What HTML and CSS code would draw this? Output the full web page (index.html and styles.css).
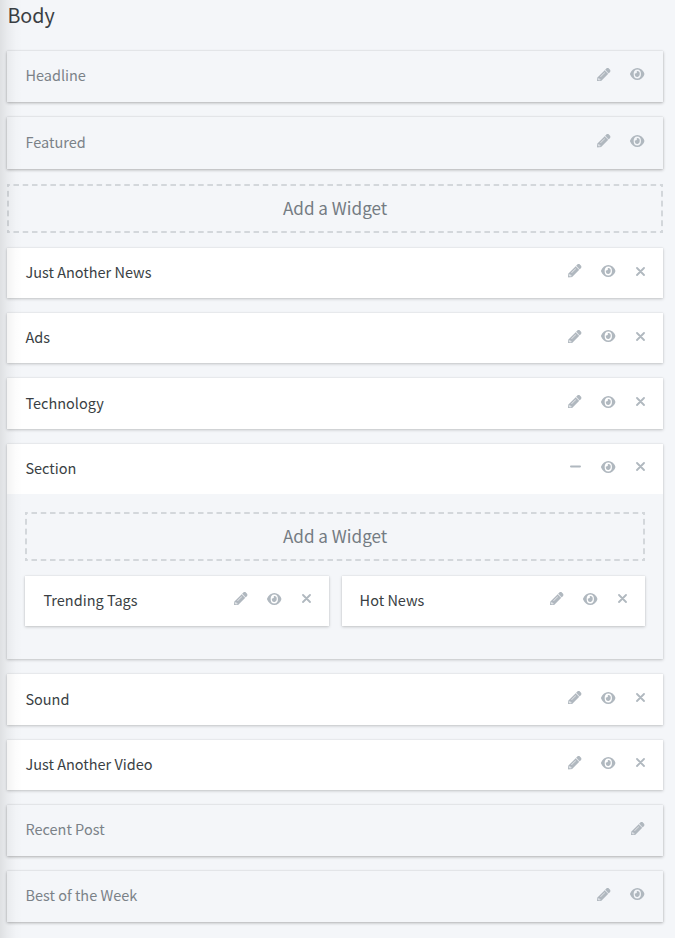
FILE: index.html
```html
<!DOCTYPE html>
<html lang="en">
<head>
<meta charset="utf-8">
<title>Body</title>
<link rel="stylesheet" href="styles.css">
</head>
<body>
<svg class="sprite" aria-hidden="true">
  <symbol id="pencil" viewBox="0 0 512 512"><path stroke="currentColor" stroke-width="14" d="M497.9 142.1l-46.1 46.1c-4.7 4.7-12.3 4.7-17 0l-111-111c-4.7-4.7-4.7-12.3 0-17l46.1-46.1c18.7-18.7 49.1-18.7 67.9 0l60.1 60.1c18.8 18.7 18.8 49.1 0 67.9zM284.2 99.8L21.6 362.4.4 483.9c-2.9 16.4 11.4 30.6 27.8 27.8l121.500-21.300 262.600-262.600c4.700-4.700 4.700-12.300 0-17l-111-111c-4.800-4.700-12.400-4.700-17.100 0zM124.100 339.900c-5.500-5.500-5.500-14.300 0-19.800l154-154c5.500-5.500 14.300-5.500 19.800 0s5.500 14.300 0 19.800l-154 154c-5.500 5.500-14.300 5.500-19.800 0zM88 424h48v36.300l-64.500 11.300-31.100-31.100L51.700 376H88v48z"/></symbol>
  <symbol id="eye" viewBox="0 64 576 384" preserveAspectRatio="none"><path d="M572.520 241.400C518.290 135.590 410.930 64 288 64S57.680 135.640 3.480 241.410a32.350 32.350 0 0 0 0 29.190C57.710 376.410 165.070 448 288 448s230.320-71.640 284.520-177.410a32.350 32.350 0 0 0 0-29.190zM288 400a144 144 0 1 1 144-144 143.930 143.930 0 0 1-144 144zm0-240a95.310 95.310 0 0 0-25.310 3.790 47.850 47.850 0 0 1-66.900 66.900A95.780 95.780 0 1 0 288 160z"/></symbol>
  <symbol id="times" viewBox="0 0 9 9"><path d="M1 1l7 7M8 1l-7 7" fill="none" stroke="currentColor" stroke-width="1.8" stroke-linecap="round"/></symbol>
  <symbol id="minus" viewBox="0 0 448 512"><path d="M416 220H32c-17.670 0-32 14.330-32 32v8c0 17.670 14.330 32 32 32h384c17.670 0 32-14.330 32-32v-8c0-17.670-14.330-32-32-32z"/></symbol>
</svg>
<main class="page">
  <h1 class="title">Body</h1>
  <div class="card locked"><span>Headline</span><div class="tools"><svg class="pencil"><use href="#pencil"/></svg><svg class="eye"><use href="#eye"/></svg></div></div>
  <div class="card locked featured"><span>Featured</span><div class="tools"><svg class="pencil"><use href="#pencil"/></svg><svg class="eye"><use href="#eye"/></svg></div></div>
  <div class="add">Add a Widget</div>
  <div class="card"><span>Just Another News</span><div class="tools"><svg class="pencil"><use href="#pencil"/></svg><svg class="eye"><use href="#eye"/></svg><svg class="times"><use href="#times"/></svg></div></div>
  <div class="card"><span>Ads</span><div class="tools"><svg class="pencil"><use href="#pencil"/></svg><svg class="eye"><use href="#eye"/></svg><svg class="times"><use href="#times"/></svg></div></div>
  <div class="card"><span>Technology</span><div class="tools"><svg class="pencil"><use href="#pencil"/></svg><svg class="eye"><use href="#eye"/></svg><svg class="times"><use href="#times"/></svg></div></div>
  <section class="section">
    <div class="section-head"><span>Section</span><div class="tools"><svg class="minus"><use href="#minus"/></svg><svg class="eye"><use href="#eye"/></svg><svg class="times"><use href="#times"/></svg></div></div>
    <div class="section-body">
      <div class="add">Add a Widget</div>
      <div class="columns">
        <div class="card"><span>Trending Tags</span><div class="tools"><svg class="pencil"><use href="#pencil"/></svg><svg class="eye"><use href="#eye"/></svg><svg class="times"><use href="#times"/></svg></div></div>
        <div class="card"><span>Hot News</span><div class="tools"><svg class="pencil"><use href="#pencil"/></svg><svg class="eye"><use href="#eye"/></svg><svg class="times"><use href="#times"/></svg></div></div>
      </div>
    </div>
  </section>
  <div class="card"><span>Sound</span><div class="tools"><svg class="pencil"><use href="#pencil"/></svg><svg class="eye"><use href="#eye"/></svg><svg class="times"><use href="#times"/></svg></div></div>
  <div class="card"><span>Just Another Video</span><div class="tools"><svg class="pencil"><use href="#pencil"/></svg><svg class="eye"><use href="#eye"/></svg><svg class="times"><use href="#times"/></svg></div></div>
  <div class="card locked"><span>Recent Post</span><div class="tools"><svg class="pencil"><use href="#pencil"/></svg></div></div>
  <div class="card locked"><span>Best of the Week</span><div class="tools"><svg class="pencil"><use href="#pencil"/></svg><svg class="eye"><use href="#eye"/></svg></div></div>
</main>
</body>
</html>
```
FILE: styles.css
```css
* { box-sizing: border-box; }
body {
  margin: 0;
  height: 938px;
  overflow: hidden;
  background: #f4f6f9;
  color: #3a3f44;
  font: 14.500px/20px "Noto Sans CJK SC", sans-serif;
}
.sprite { position: absolute; width: 0; height: 0; }
.page {
  position: relative;
  height: 938px;
  padding: .4px 12.200px 0 7.400px;
  display: flex;
  flex-direction: column;
  gap: 15px;
}
/* Shadow cast by the neighbouring sidebar */
.page::after {
  content: "";
  position: absolute;
  inset: 0 auto 0 0;
  width: 22px;
  background: linear-gradient(90deg, rgba(0,0,0,.09), rgba(0,0,0,.045) 35%, rgba(0,0,0,.012) 70%, transparent);
}
.title { margin: 0 0 5.500px; font-size: 19.700px; font-weight: 400; line-height: 30px; }
.card, .section-head {
  height: 50.300px;
  padding: 0 18px;
  display: flex;
  align-items: center;
  justify-content: space-between;
  background: #fff;
}
.card span, .section-head span { margin-top: -2px; }
.card, .section { flex-shrink: 0; box-shadow: 0 0 1px rgba(0,0,0,.125), 0 1px 3px rgba(0,0,0,.2); }
.locked { background: #f4f6f9; color: #7b8288; height: 51px; box-shadow: 0 0 1px rgba(0,0,0,.12), 0 1px 3px rgba(0,0,0,.28); }
.featured { height: 52px; }
.tools { display: flex; align-items: center; color: #b0b8bf; margin-top: -4px; }
.tools svg { display: block; fill: currentColor; height: 13px; }
.tools .pencil { width: 13.500px; height: 13.500px; }
.tools .eye { width: 14.600px; height: 12px; margin-left: 19.500px; }
.tools .times { width: 9px; height: 9px; margin-left: 20px; }
.tools .minus { width: 11px; margin-right: 1px; }
.add {
  --dash: #d3d7db 30%, transparent 30%, transparent 70%, #d3d7db 70%;
  flex-shrink: 0;
  height: 49px;
  padding-bottom: 1px;
  display: flex;
  align-items: center;
  justify-content: center;
  color: #747c83;
  font-size: 17.100px;
  background:
    linear-gradient(90deg, var(--dash)) 0 0 / 9.200px 2px round no-repeat,
    linear-gradient(90deg, var(--dash)) 0 100% / 9.200px 2px round no-repeat,
    linear-gradient(var(--dash)) 0 0 / 2px 9.200px no-repeat round,
    linear-gradient(var(--dash)) 100% 0 / 2px 9.200px no-repeat round;
}
.section { height: 215.600px; }
.section-body { padding: 18px; }
.columns { display: grid; grid-template-columns: 1fr 1fr; gap: 13px; margin-top: 14.500px; }
```
